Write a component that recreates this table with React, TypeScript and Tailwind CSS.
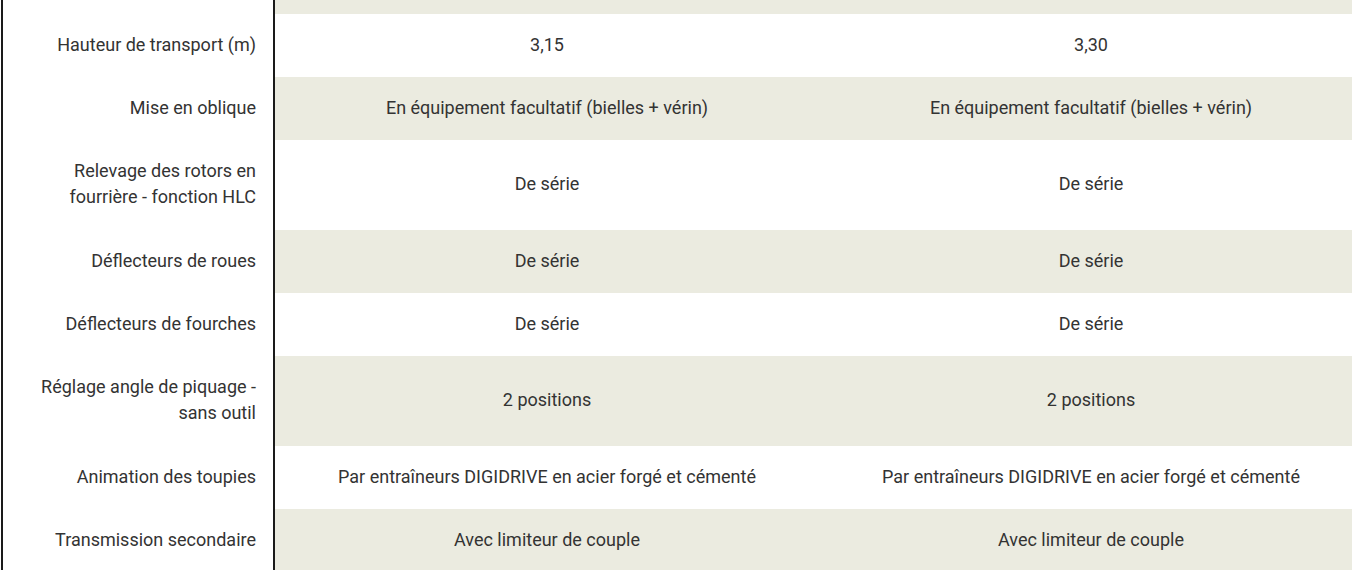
import React from 'react';

type Row = { label: string; a: string; b: string; tall?: boolean };

const rows: Row[] = [
  { label: 'Hauteur de transport (m)', a: '3,15', b: '3,30' },
  { label: 'Mise en oblique', a: 'En équipement facultatif (bielles + vérin)', b: 'En équipement facultatif (bielles + vérin)' },
  { label: 'Relevage des rotors en fourrière - fonction HLC', a: 'De série', b: 'De série', tall: true },
  { label: 'Déflecteurs de roues', a: 'De série', b: 'De série' },
  { label: 'Déflecteurs de fourches', a: 'De série', b: 'De série' },
  { label: 'Réglage angle de piquage - sans outil', a: '2 positions', b: '2 positions', tall: true },
  { label: 'Animation des toupies', a: 'Par entraîneurs DIGIDRIVE en acier forgé et cémenté', b: 'Par entraîneurs DIGIDRIVE en acier forgé et cémenté' },
  { label: 'Transmission secondaire', a: 'Avec limiteur de couple', b: 'Avec limiteur de couple' },
];

const SpecTable: React.FC = () => {
  return (
    <div className="w-[1352px] h-[570px] overflow-hidden bg-white">
      <div
        className="ml-[1px] w-[1362px] border-l-2 border-[#1a1a1a] text-[18px] leading-[26px] text-[#333333]"
        style={{ fontFamily: 'Roboto, "Liberation Sans", sans-serif' }}
      >
        <div className="grid grid-cols-[272px_544px_544px]">
          {/* bottom of the previous row, cut off at the top */}
          <div className="h-[14px] border-r-2 border-[#1a1a1a] bg-white" />
          <div className="h-[14px] bg-[#ebebe0]" />
          <div className="h-[14px] bg-[#ebebe0]" />

          {rows.map((row, i) => {
            const bg = i % 2 === 0 ? 'bg-white' : 'bg-[#ebebe0]';
            const h = row.tall ? 'h-[90px] pb-[2px]' : 'h-[63px] pb-[1px]';
            return (
              <React.Fragment key={row.label}>
                <div className={`flex items-center justify-end border-r-2 border-[#1a1a1a] bg-white px-[17px] text-right ${h}`}>
                  {row.label}
                </div>
                <div className={`flex items-center justify-center px-4 text-center ${h} ${bg}`}>{row.a}</div>
                <div className={`flex items-center justify-center px-4 text-center ${h} ${bg}`}>{row.b}</div>
              </React.Fragment>
            );
          })}
        </div>
      </div>
    </div>
  );
};

export default function App() {
  return <SpecTable />;
}
